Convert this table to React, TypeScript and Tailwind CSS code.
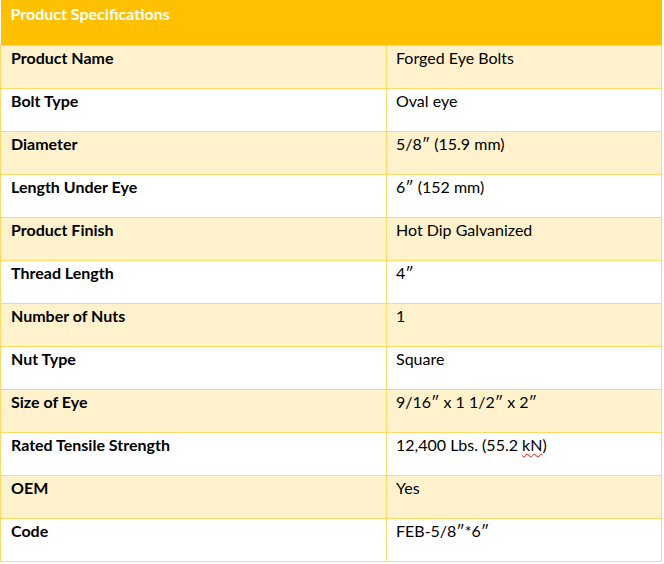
const rows: [string, React.ReactNode][] = [
  ['Product Name', 'Forged Eye Bolts'],
  ['Bolt Type', 'Oval eye'],
  ['Diameter', '5/8″ (15.9 mm)'],
  ['Length Under Eye', '6″ (152 mm)'],
  ['Product Finish', 'Hot Dip Galvanized'],
  ['Thread Length', '4″'],
  ['Number of Nuts', '1'],
  ['Nut Type', 'Square'],
  ['Size of Eye', '9/16″ x 1 1/2″ x 2″'],
  [
    'Rated Tensile Strength',
    <>
      12,400 Lbs. (55.2{' '}
      <span className="underline decoration-wavy decoration-[#ff0000] decoration-1 underline-offset-2">kN</span>)
    </>,
  ],
  ['OEM', 'Yes'],
  ['Code', 'FEB-5/8″*6″'],
];

export default function App(): React.ReactElement {
  return (
    <div className="h-[564px] w-[664px] bg-white font-['Lato',sans-serif] text-[16px] leading-[18px] text-black">
      <table className="w-[662px] table-fixed border-collapse">
        <colgroup>
          <col className="w-[386px]" />
          <col />
        </colgroup>
        <thead>
          <tr className="h-[45px] bg-[#ffc000]">
            <th colSpan={2} className="px-[10px] pb-[21px] pt-[5px] text-left align-top font-bold text-white">
              Product Specifications
            </th>
          </tr>
        </thead>
        <tbody>
          {rows.map(([label, value], index) => (
            <tr key={label} className={`h-[43px] ${index % 2 === 0 ? 'bg-[#fff2cc]' : 'bg-white'}`}>
              <td className="border border-[#ffd966] px-[10px] pt-[3px] align-top font-bold">{label}</td>
              <td className="border border-[#ffd966] px-[9px] pt-[3px] align-top">{value}</td>
            </tr>
          ))}
        </tbody>
      </table>
    </div>
  );
}
